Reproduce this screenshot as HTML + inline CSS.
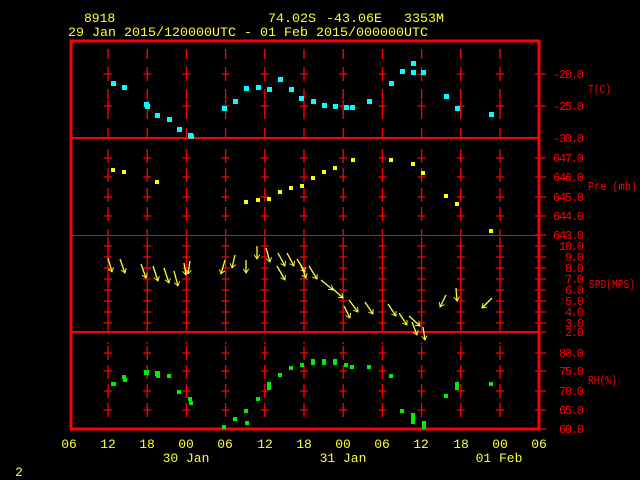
<!DOCTYPE html>
<html><head><meta charset="utf-8"><style>
html,body{margin:0;padding:0;background:#000;width:640px;height:480px;overflow:hidden}
svg{display:block}
text{font-family:"Liberation Mono","DejaVu Sans Mono",monospace}
</style></head><body>
<svg width="640" height="480" viewBox="0 0 640 480">
<defs>
<marker id="ah" viewBox="-7 -5 8 10" markerWidth="7" markerHeight="7" refX="0" refY="0" orient="auto" markerUnits="userSpaceOnUse">
<path d="M-6,-4 L0,0 L-6,4" fill="none" stroke="#ffff33" stroke-width="1.3"/>
</marker>
<g id="col" stroke="#ff0000" stroke-width="1.3" fill="none">
<path d="M0,49V59M0,67V81M-4,74H4M0,89V99M0,100V119M-4,106H4M0,128V138"/>
<path d="M0,149V163M-4,158H4M0,168V182M-4,177H4M0,188V202M-4,197H4M0,207V221M-4,216H4M0,229V235"/>
<path d="M0,237V332M-4,246H4M-4,257H4M-4,268H4M-4,279H4M-4,290H4M-4,301H4M-4,312H4M-4,323H4"/>
<path d="M0,342V344M0,346V360M-4,353H4M0,365V379M-4,371H4M0,384V398M-4,391H4M0,403V417M-4,410H4"/>
</g>
</defs>
<rect width="640" height="480" fill="#000"/>
<g fill="#ffff33" font-size="13">
<text x="84" y="22">8918</text>
<text x="268" y="22" textLength="48" lengthAdjust="spacingAndGlyphs">74.02S</text>
<text x="326" y="22" textLength="56" lengthAdjust="spacingAndGlyphs">-43.06E</text>
<text x="404" y="22" textLength="40" lengthAdjust="spacingAndGlyphs">3353M</text>
<text x="68" y="36" textLength="360" lengthAdjust="spacingAndGlyphs">29 Jan 2015/120000UTC - 01 Feb 2015/000000UTC</text>
</g>
<use href="#col" x="108"/><use href="#col" x="147.2"/><use href="#col" x="186.4"/><use href="#col" x="225.6"/><use href="#col" x="264.8"/><use href="#col" x="304"/><use href="#col" x="343.2"/><use href="#col" x="382.4"/><use href="#col" x="421.6"/><use href="#col" x="460.8"/><use href="#col" x="500"/>
<g stroke="#ff0000" fill="none">
<line x1="70" y1="138" x2="540" y2="138" stroke-width="2"/>
<line x1="70" y1="235.5" x2="540" y2="235.5" stroke-width="1"/>
<line x1="70" y1="332" x2="540" y2="332" stroke-width="2"/>
<rect x="71" y="41" width="468" height="388" stroke-width="3"/>
<path stroke-width="1.3" d="M535,74H546M535,106H546M535,158H546M535,177H546M535,197H546M535,216H546M535,235H546M535,246H546M535,257H546M535,268H546M535,279H546M535,290H546M535,301H546M535,312H546M535,323H546M535,332H546M535,353H546M535,371H546M535,391H546M535,410H546M535,429H546"/>
</g>
<g fill="#ff0000" font-size="12" text-anchor="end" lengthAdjust="spacingAndGlyphs">
<text x="584" y="78" textLength="31">-20.0</text><text x="584" y="110" textLength="31">-25.0</text><text x="584" y="142" textLength="31">-30.0</text>
<text x="584" y="162" textLength="31">647.0</text><text x="584" y="181" textLength="31">646.0</text><text x="584" y="201" textLength="31">645.0</text><text x="584" y="220" textLength="31">644.0</text><text x="584" y="239" textLength="31">643.0</text>
<text x="584" y="250" textLength="25">10.0</text><text x="584" y="261" textLength="19">9.0</text><text x="584" y="272" textLength="19">8.0</text><text x="584" y="283" textLength="19">7.0</text><text x="584" y="294" textLength="19">6.0</text><text x="584" y="305" textLength="19">5.0</text><text x="584" y="316" textLength="19">4.0</text><text x="584" y="327" textLength="19">3.0</text><text x="584" y="336" textLength="19">2.0</text>
<text x="584" y="357" textLength="25">80.0</text><text x="584" y="375" textLength="25">75.0</text><text x="584" y="395" textLength="25">70.0</text><text x="584" y="414" textLength="25">65.0</text><text x="584" y="433" textLength="25">60.0</text>
</g>
<g fill="#ff0000" font-size="12">
<text x="588" y="93" textLength="23" lengthAdjust="spacingAndGlyphs">T(C)</text>
<text x="588" y="190" textLength="49" lengthAdjust="spacingAndGlyphs">Pre (mb)</text>
<text x="589" y="288" textLength="46" lengthAdjust="spacingAndGlyphs">SPD(MPS)</text>
<text x="588" y="384" textLength="29" lengthAdjust="spacingAndGlyphs">RH(%)</text>
</g>
<g fill="#ffff33" font-size="13" text-anchor="middle">
<text x="69" y="448">06</text><text x="108" y="448">12</text><text x="147" y="448">18</text><text x="186" y="448">00</text><text x="225" y="448">06</text><text x="265" y="448">12</text><text x="304" y="448">18</text><text x="343" y="448">00</text><text x="382" y="448">06</text><text x="421" y="448">12</text><text x="461" y="448">18</text><text x="500" y="448">00</text><text x="539" y="448">06</text>
<text x="186" y="462">30 Jan</text><text x="343" y="462">31 Jan</text><text x="499" y="462">01 Feb</text>
<text x="19" y="476">2</text>
</g>
<g fill="#00ffff">
<rect x="111" y="81" width="5" height="5"/><rect x="122" y="85" width="5" height="5"/><rect x="144" y="102" width="5" height="5"/><rect x="145" y="104" width="5" height="5"/><rect x="155" y="113" width="5" height="5"/><rect x="167" y="117" width="5" height="5"/><rect x="177" y="127" width="5" height="5"/><rect x="188" y="133" width="5" height="5"/><rect x="189" y="134" width="5" height="5"/><rect x="222" y="106" width="5" height="5"/><rect x="233" y="99" width="5" height="5"/><rect x="244" y="86" width="5" height="5"/><rect x="256" y="85" width="5" height="5"/><rect x="267" y="87" width="5" height="5"/><rect x="278" y="77" width="5" height="5"/><rect x="289" y="87" width="5" height="5"/><rect x="299" y="96" width="5" height="5"/><rect x="311" y="99" width="5" height="5"/><rect x="322" y="103" width="5" height="5"/><rect x="333" y="104" width="5" height="5"/><rect x="344" y="105" width="5" height="5"/><rect x="350" y="105" width="5" height="5"/><rect x="367" y="99" width="5" height="5"/><rect x="389" y="81" width="5" height="5"/><rect x="400" y="69" width="5" height="5"/><rect x="411" y="61" width="5" height="5"/><rect x="411" y="70" width="5" height="5"/><rect x="421" y="70" width="5" height="5"/><rect x="444" y="94" width="5" height="5"/><rect x="455" y="106" width="5" height="5"/><rect x="489" y="112" width="5" height="5"/>
</g>
<g fill="#ffff00">
<rect x="111" y="168" width="4" height="4"/><rect x="122" y="170" width="4" height="4"/><rect x="155" y="180" width="4" height="4"/><rect x="244" y="200" width="4" height="4"/><rect x="256" y="198" width="4" height="4"/><rect x="267" y="197" width="4" height="4"/><rect x="278" y="190" width="4" height="4"/><rect x="289" y="186" width="4" height="4"/><rect x="300" y="184" width="4" height="4"/><rect x="311" y="176" width="4" height="4"/><rect x="322" y="170" width="4" height="4"/><rect x="333" y="166" width="4" height="4"/><rect x="351" y="158" width="4" height="4"/><rect x="389" y="158" width="4" height="4"/><rect x="411" y="162" width="4" height="4"/><rect x="421" y="171" width="4" height="4"/><rect x="444" y="194" width="4" height="4"/><rect x="455" y="202" width="4" height="4"/><rect x="489" y="229" width="4" height="4"/>
</g>
<g stroke="#ffff33" stroke-width="1.3" fill="none" marker-end="url(#ah)">
<path d="M108,258L112,272"/><path d="M120,259L125,273"/><path d="M141,264L146,278"/><path d="M153,266L158,281"/><path d="M164,268L169,283"/><path d="M174,271L178,286"/><path d="M190,261L188,274"/><path d="M184,263L186,275"/>
<path d="M225,260L221,274"/><path d="M235,255L232,268"/><path d="M246,260L246,273"/><path d="M257,246L257,259"/><path d="M266,248L270,262"/><path d="M278,253L285,266"/><path d="M287,253L294,266"/><path d="M277,266L285,280"/><path d="M297,259L305,272"/><path d="M301,265L306,278"/><path d="M309,266L317,279"/><path d="M321,280L333,290"/><path d="M332,288L343,298"/><path d="M349,300L358,312"/><path d="M344,306L350,318"/><path d="M365,302L373,314"/><path d="M388,304L396,316"/><path d="M399,313L407,325"/><path d="M409,316L420,326"/><path d="M412,322L417,335"/><path d="M423,327L425,340"/><path d="M446,295L440,307"/><path d="M456,288L457,301"/><path d="M492,298L482,308"/>
</g>
<g fill="#00ee00">
<rect x="111" y="382" width="5" height="4"/><rect x="122" y="375" width="4" height="4"/><rect x="123" y="378" width="4" height="4"/><rect x="144" y="370" width="5" height="5"/><rect x="155" y="371" width="5" height="5"/><rect x="156" y="374" width="4" height="4"/><rect x="167" y="374" width="4" height="4"/><rect x="177" y="390" width="4" height="4"/><rect x="188" y="397" width="4" height="4"/><rect x="189" y="401" width="4" height="4"/><rect x="222" y="425" width="4" height="4"/><rect x="233" y="417" width="4" height="4"/><rect x="244" y="409" width="4" height="4"/><rect x="245" y="421" width="4" height="4"/><rect x="256" y="397" width="4" height="4"/><rect x="267" y="382" width="4" height="8"/><rect x="278" y="373" width="4" height="4"/><rect x="289" y="366" width="4" height="4"/><rect x="300" y="363" width="4" height="4"/><rect x="311" y="359" width="4" height="6"/><rect x="322" y="359" width="4" height="6"/><rect x="333" y="359" width="4" height="6"/><rect x="344" y="363" width="4" height="4"/><rect x="350" y="365" width="4" height="4"/><rect x="367" y="365" width="4" height="4"/><rect x="389" y="374" width="4" height="4"/><rect x="400" y="409" width="4" height="4"/><rect x="411" y="413" width="4" height="11"/><rect x="422" y="421" width="4" height="8"/><rect x="444" y="394" width="4" height="4"/><rect x="455" y="382" width="4" height="8"/><rect x="489" y="382" width="4" height="4"/>
</g>
</svg>
</body></html>
